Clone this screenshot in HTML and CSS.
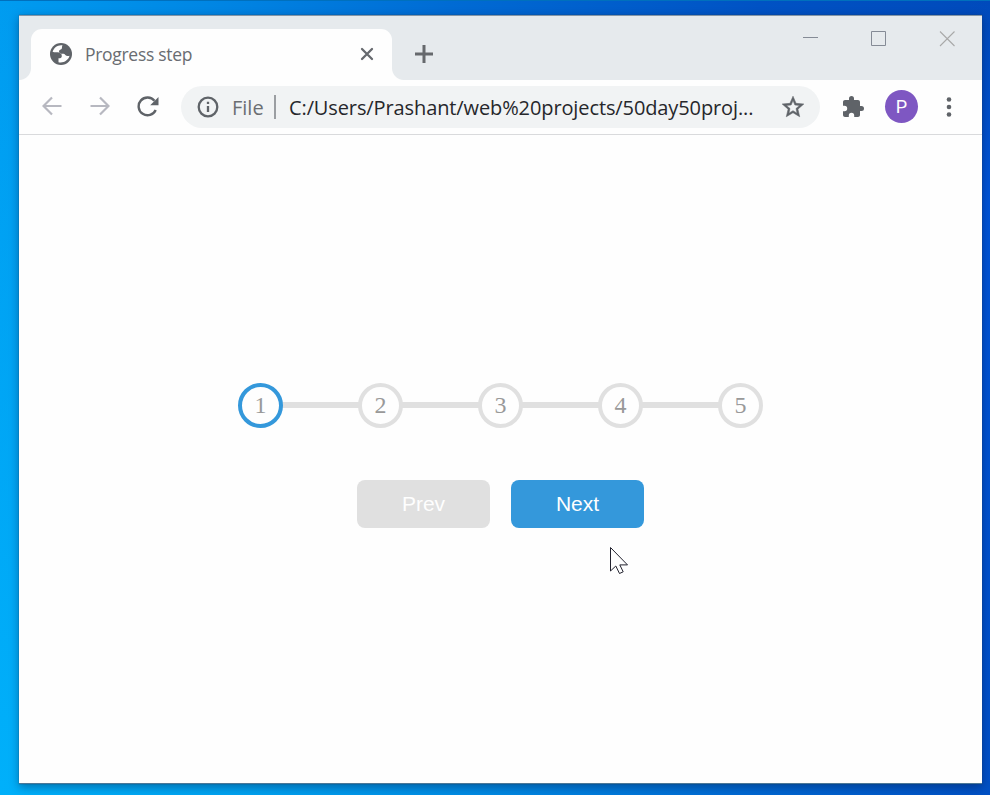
FILE: index.html
```html
<!DOCTYPE html>
<html lang="en">
<head>
<meta charset="utf-8">
<title>Progress step</title>
<link rel="stylesheet" href="styles.css">
</head>
<body>
<div class="window">
  <header class="tabstrip">
    <div class="tab">
      <svg class="globe" viewBox="0 0 24 24"><circle cx="12" cy="12" r="11" fill="#5f6368"/><path fill="#fefefe" d="M13.500 3.300C9 2.600 4.800 5.500 3.600 9.800C5 10.500 7 10.300 8.500 10.300C11.500 10.300 12.800 12 12.800 14C12.800 15.500 12 16.300 9.500 16.300V20.200C14 21.500 19.500 18.500 20.500 13.800C18.500 14.300 17.200 14 16.300 13C15.500 12 15 11.800 13.800 11.800C11.500 11.800 10 11 10 9.500C10 7.800 11.500 7.800 12.300 7.300C13.500 6.500 12.500 5 13.500 3.300z"/></svg>
      <span class="tab-title">Progress step</span>
      <svg class="tab-close" viewBox="0 0 14 14"><path d="M2 2l10 10M12 2L2 12"/></svg>
    </div>
    <svg class="new-tab" viewBox="0 0 18 18"><path d="M9 0v18M0 9h18"/></svg>
    <div class="controls">
      <svg viewBox="0 0 16 16"><path d="M0 6.500h15"/></svg>
      <svg viewBox="0 0 16 16"><path d="M.5.500h14v14H.5z"/></svg>
      <svg viewBox="0 0 16 16"><path class="faint" d="M1 .5l14.500 14.500M15.500 .5L1 15"/></svg>
    </div>
  </header>
  <nav class="toolbar">
    <svg class="arrow" viewBox="0 0 20 20"><path d="M19.500 10H2M10 1.500L1.500 10l8.500 8.500"/></svg>
    <svg class="arrow" viewBox="0 0 20 20"><path d="M.5 10H18M10 1.500l8.500 8.500-8.500 8.500"/></svg>
    <svg class="reload" viewBox="0 0 22 22"><path class="stroke" d="M17.500 4.800A8.900 8.900 0 1 0 18.700 14"/><path class="fill" d="M21.500 1v8.300h-8.300z"/></svg>
    <div class="address">
      <svg class="info" viewBox="0 0 22 22"><circle cx="11" cy="11" r="9.300"/><path d="M11 10v6M11 5.800v2.200"/></svg>
      <span class="scheme">File</span>
      <span class="divider"></span>
      <span class="url">C:/Users/Prashant/web%20projects/50day50proj...</span>
      <svg class="star" viewBox="0 0 24 24"><path d="M22 9.240l-7.190-.62L12 2 9.190 8.630 2 9.240l5.460 4.730L5.820 21 12 17.270 18.180 21l-1.630-7.030L22 9.240zM12 15.400l-3.760 2.270 1-4.280-3.320-2.880 4.380-.38L12 6.100l1.710 4.040 4.380.38-3.320 2.880 1 4.280L12 15.400z"/></svg>
    </div>
    <svg class="puzzle" viewBox="0 0 24 24"><path d="M20.500 11H19V7c0-1.100-.9-2-2-2h-4V3.500a2.500 2.500 0 0 0-5 0V5H4c-1.100 0-1.990.9-1.990 2v3.800H3.500a2.700 2.700 0 0 1 0 5.400H2V20c0 1.100.9 2 2 2h3.800v-1.500a2.700 2.700 0 0 1 5.400 0V22H17c1.100 0 2-.9 2-2v-4h1.500a2.500 2.500 0 0 0 0-5z"/></svg>
    <span class="avatar">P</span>
    <svg class="menu" viewBox="0 0 6 20"><circle cx="3" cy="2.500" r="2.300"/><circle cx="3" cy="10" r="2.300"/><circle cx="3" cy="17.500" r="2.300"/></svg>
  </nav>
  <main class="page">
    <ol class="steps">
      <li class="step active">1</li>
      <li class="step">2</li>
      <li class="step">3</li>
      <li class="step">4</li>
      <li class="step">5</li>
    </ol>
    <div class="buttons">
      <button class="btn" disabled>Prev</button>
      <button class="btn primary">Next</button>
    </div>
  </main>
</div>
<svg class="cursor" viewBox="0 0 19 28"><path d="M.5.500v23.500l5.300-5 3.700 7.500 3.700-1.700-3.400-6.900h7.700z"/></svg>
</body>
</html>
```
FILE: styles.css
```css
* {
  box-sizing: border-box;
}

body {
  margin: 0;
  height: 795px;
  padding: 14px 8px 12px 19px;
  overflow: hidden;
  border-top: 1px solid #0070bd;
  background:
    linear-gradient(to right, #00b0fa 0, #00a2f0 250px, #0088e2 500px, #0068d2 750px, #0050c4 100%) bottom / 100% 14px no-repeat,
    linear-gradient(to bottom, rgba(0, 180, 255, 0) 0, rgba(0, 176, 250, 1) 100%) left / 22px 100% no-repeat,
    linear-gradient(to bottom, rgba(0, 86, 222, 0) 0, rgba(0, 86, 222, .8) 200px, rgba(0, 80, 200, .9) 100%) right / 20px 100% no-repeat,
    linear-gradient(to right, #009cf0 0, #0083e2 240px, #006bd4 450px, #0052c4 760px, #004abb 100%);
  font-family: "Open Sans", "Noto Sans", sans-serif;
}

svg {
  display: block;
  flex: none;
}

.window {
  height: 769px;
  width: 963px;
  display: flex;
  flex-direction: column;
  background: #fefefe;
  border-top: 1px solid #8596a6;
  border-bottom: 1px solid #4b7898;
  box-shadow: 0 0 1px 0 rgba(40, 70, 90, .8), 0 3px 9px rgba(0, 20, 60, .4);
}

.tabstrip {
  height: 64px;
  flex: none;
  display: flex;
  background: #e6eaed;
  padding: 13px 27px 0 12px;
}

.tab {
  position: relative;
  width: 361px;
  height: 51px;
  display: flex;
  align-items: center;
  padding: 0 18px 2px;
  background: #fefefe;
  border-radius: 11px 11px 0 0;
}

.tab::before,
.tab::after {
  content: "";
  position: absolute;
  bottom: 0;
  width: 12px;
  height: 12px;
}

.tab::before {
  left: -12px;
  background: radial-gradient(circle at 0 0, #e6eaed 11.5px, #fefefe 12.5px);
}

.tab::after {
  right: -12px;
  background: radial-gradient(circle at 100% 0, #e6eaed 11.5px, #fefefe 12.5px);
}

.globe {
  width: 24px;
  height: 24px;
}

.tab-title {
  flex: 1;
  margin-left: 12px;
  font-size: 17.5px;
  letter-spacing: -.3px;
  color: #696c71;
}

.tab-close {
  width: 14px;
  height: 14px;
  fill: none;
  stroke: #66696e;
  stroke-width: 2.3;
  stroke-linecap: round;
}

.new-tab {
  width: 18px;
  height: 18px;
  margin: 16px 0 0 23px;
  stroke: #66696d;
  stroke-width: 3;
}

.controls {
  margin-left: auto;
  display: flex;
  gap: 52px;
  padding-top: 2px;
}

.controls svg {
  width: 16px;
  height: 16px;
  fill: none;
  stroke: #858b96;
}

.controls .faint {
  stroke: #a9a9a9;
  stroke-width: 1.1;
}

.toolbar {
  height: 55px;
  flex: none;
  display: flex;
  align-items: center;
  padding: 0 30px 1px 23px;
  border-bottom: 1px solid #d9dadc;
}

.arrow {
  width: 20px;
  height: 20px;
  margin: -1px 28px 0 0;
  fill: none;
  stroke: #b7b8c0;
  stroke-width: 2.2;
}

.reload {
  width: 22px;
  height: 22px;
  margin-left: -1px;
}

.reload .stroke {
  fill: none;
  stroke: #5f6368;
  stroke-width: 2.4;
}

.reload .fill {
  fill: #5f6368;
}

.address {
  width: 639px;
  height: 42px;
  margin: 1px 0 0 22px;
  padding: 0 14px 0 16px;
  display: flex;
  align-items: center;
  background: #f1f3f4;
  border-radius: 21px;
  font-size: 20px;
  white-space: nowrap;
}

.info {
  width: 22px;
  height: 22px;
  fill: none;
  stroke: #5f6368;
  stroke-width: 2.3;
}

.scheme {
  margin-left: 13px;
  width: 31px;
  color: #6b6e72;
}

.divider {
  width: 2px;
  height: 24px;
  margin: 0 13px 0 11px;
  background: #9b9ea2;
}

.url {
  color: #26272b;
  letter-spacing: -.11px;
}

.star {
  width: 26px;
  height: 26px;
  margin-left: auto;
  fill: #5f6368;
  stroke: #5f6368;
  stroke-width: .5;
}

.puzzle {
  width: 24px;
  height: 24px;
  margin-left: 21px;
  fill: #5f6368;
}

.avatar {
  width: 33px;
  height: 33px;
  margin-left: 20px;
  border-radius: 50%;
  background: #7e57c2;
  color: #fefefe;
  font: 18px/33px Roboto, sans-serif;
  text-align: center;
}

.menu {
  width: 6px;
  height: 20px;
  margin-left: auto;
  fill: #5f6368;
}

.page {
  flex: 1;
  display: flex;
  flex-direction: column;
  align-items: center;
  padding-top: 248px;
}

.steps {
  width: 525px;
  margin: 0;
  padding: 0;
  display: flex;
  justify-content: space-between;
  list-style: none;
  background: linear-gradient(#e0e0e0, #e0e0e0) center 19px / 500px 6px no-repeat;
}

.step {
  width: 45px;
  height: 45px;
  display: flex;
  align-items: center;
  justify-content: center;
  padding-bottom: 2px;
  border: 4px solid #e0e0e0;
  border-radius: 50%;
  background: #fefefe;
  color: #999;
  font: 24px/1 "Liberation Serif", serif;
}

.step.active {
  border-color: #3498db;
}

.buttons {
  display: flex;
  gap: 21px;
  margin-top: 52px;
}

.btn {
  width: 133px;
  height: 48px;
  padding: 0;
  border: 0;
  border-radius: 8px;
  background: #e0e0e0;
  color: #fefefe;
  font: 21px/48px "Liberation Sans", sans-serif;
}

.btn.primary {
  background: #3498db;
}

.cursor {
  position: absolute;
  left: 610px;
  top: 547px;
  width: 19px;
  height: 28px;
  fill: #fefefe;
  stroke: #22222e;
  stroke-width: 1;
}
```
